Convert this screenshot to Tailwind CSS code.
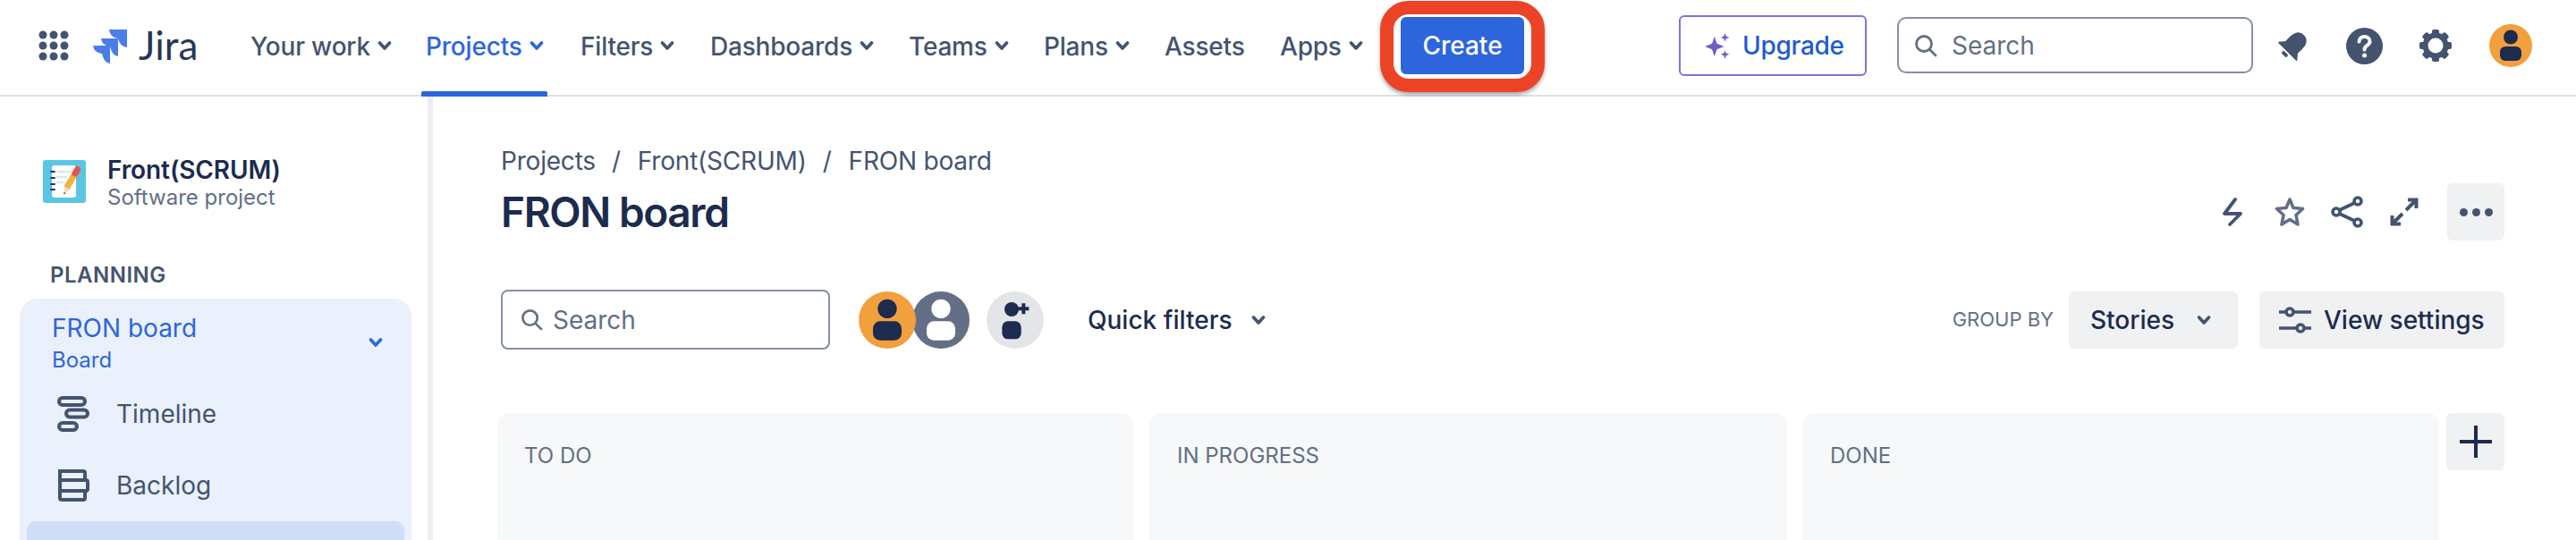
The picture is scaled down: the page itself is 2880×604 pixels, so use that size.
<!DOCTYPE html>
<html lang="en">
<head>
<meta charset="utf-8">
<title>FRON board</title>
<script src="https://cdn.jsdelivr.net/npm/@tailwindcss/browser@4"></script>
</head>
<body class="bg-white">
<div class="w-[2880px] h-[604px] overflow-hidden bg-white font-['Inter','Liberation_Sans',sans-serif] text-[#44546F]">

  <!-- Top navigation -->
  <header class="relative flex h-[108px] items-start border-b-2 border-[#DFE1E6] bg-white">
    <svg class="ml-[42px] mt-[33px] h-[36px] w-[36px] shrink-0" viewBox="0 0 36 36" fill="#44546F"><circle cx="6" cy="6" r="4.5"/><circle cx="18" cy="6" r="4.5"/><circle cx="30" cy="6" r="4.5"/><circle cx="6" cy="18" r="4.5"/><circle cx="18" cy="18" r="4.5"/><circle cx="30" cy="18" r="4.5"/><circle cx="6" cy="30" r="4.5"/><circle cx="18" cy="30" r="4.5"/><circle cx="30" cy="30" r="4.5"/></svg>
    <svg class="ml-[26px] mt-[33px] h-[38px] w-[38px] shrink-0" viewBox="0 0 38 38" fill="#4A7DE8">
      <path d="M18 0H38V20Q30 19 28 10Q19 9 18 0Z"/>
      <path d="M9 10H28V30Q21 29 19 19Q10 18 9 10Z"/>
      <path d="M0 18H19V38Q12 37 10 27Q1 26 0 18Z"/>
    </svg>
    <span class="ml-[13px] mt-[20px] w-[125px] shrink-0 font-['Lato',sans-serif] text-[44px] leading-[60px] font-normal text-[#253858]">Jira</span>

    <nav class="flex h-[106px] items-start text-[28px] leading-[104px] font-medium tracking-[-0.2px] whitespace-nowrap">
      <a class="flex w-[191px] items-start">Your work<svg class="ml-[8px] mt-[43px] h-[16px] w-[16px]" viewBox="0 0 16 16" fill="none" stroke="#44546F" stroke-width="3.6" stroke-linecap="round" stroke-linejoin="round"><path d="M2.5 5 8 11l5.500-6"/></svg></a>
      <a class="relative flex h-[107px] w-[178px] items-start pl-[5px] text-[#2D66DC]">Projects<svg class="ml-[8px] mt-[43px] h-[16px] w-[16px]" viewBox="0 0 16 16" fill="none" stroke="#2D66DC" stroke-width="3.6" stroke-linecap="round" stroke-linejoin="round"><path d="M2.500 5 8 11l5.500-6"/></svg><span class="absolute bottom-[-1px] left-0 h-[6px] w-[141px] rounded-t-[2px] bg-[#2D66DC]"></span></a>
      <a class="flex w-[145px] items-start">Filters<svg class="ml-[8px] mt-[43px] h-[16px] w-[16px]" viewBox="0 0 16 16" fill="none" stroke="#44546F" stroke-width="3.6" stroke-linecap="round" stroke-linejoin="round"><path d="M2.500 5 8 11l5.500-6"/></svg></a>
      <a class="flex w-[222px] items-start">Dashboards<svg class="ml-[8px] mt-[43px] h-[16px] w-[16px]" viewBox="0 0 16 16" fill="none" stroke="#44546F" stroke-width="3.6" stroke-linecap="round" stroke-linejoin="round"><path d="M2.500 5 8 11l5.500-6"/></svg></a>
      <a class="flex w-[151px] items-start">Teams<svg class="ml-[8px] mt-[43px] h-[16px] w-[16px]" viewBox="0 0 16 16" fill="none" stroke="#44546F" stroke-width="3.6" stroke-linecap="round" stroke-linejoin="round"><path d="M2.500 5 8 11l5.500-6"/></svg></a>
      <a class="flex w-[135px] items-start">Plans<svg class="ml-[8px] mt-[43px] h-[16px] w-[16px]" viewBox="0 0 16 16" fill="none" stroke="#44546F" stroke-width="3.6" stroke-linecap="round" stroke-linejoin="round"><path d="M2.500 5 8 11l5.500-6"/></svg></a>
      <a class="w-[129px]">Assets</a>
      <a class="flex w-[112px] items-start">Apps<svg class="ml-[8px] mt-[43px] h-[16px] w-[16px]" viewBox="0 0 16 16" fill="none" stroke="#44546F" stroke-width="3.6" stroke-linecap="round" stroke-linejoin="round"><path d="M2.500 5 8 11l5.500-6"/></svg></a>
    </nav>

    <!-- Create, with the red annotation round it -->
    <div class="mt-[1px] flex h-[102px] w-[184px] shrink-0 items-start rounded-[32px] border-[15px] border-[#EC4326] bg-white shadow-[0_3px_4px_rgba(0,0,0,0.35)]">
      <button class="ml-[8px] mt-[3px] h-[64px] w-[138px] rounded-[6px] bg-[#2D66DC] text-[28px] font-medium text-white">Create</button>
    </div>

    <button class="ml-[150px] mt-[17px] flex h-[68px] w-[210px] shrink-0 items-center rounded-[6px] border-2 border-[#8270DB] pl-[26px] text-[28px] font-medium tracking-[-0.3px] text-[#1F5BCE]">
      <svg class="mr-[13px] h-[30px] w-[30px]" viewBox="0 0 28 28" fill="#6E5DC6"><path d="M11 4.500 13.500 12 21 15l-7.500 3L11 25.500 8.500 18 1 15l7.500-3Z"/><path d="M22 1l1.200 3.300L26.500 5.500l-3.300 1.200L22 10l-1.200-3.300-3.300-1.200 3.300-1.200Z"/><path d="M22 19l1.200 3 3.300 1.200-3.300 1.200L22 28l-1.200-3.600-3.300-1.200 3.300-1.200Z"/></svg>
      Upgrade
    </button>

    <div class="ml-[34px] mt-[19px] flex h-[63px] w-[398px] shrink-0 items-center rounded-[10px] border-2 border-[#8590A2] pl-[17px] text-[28px] text-[#626F86]">
      <svg class="mr-[16px] h-[26px] w-[26px]" viewBox="0 0 26 26" fill="none" stroke="#626F86" stroke-width="2.800" stroke-linecap="round"><circle cx="11" cy="11" r="8.500"/><path d="M17.500 17.500 24 24"/></svg>
      Search
    </div>

    <svg class="ml-[27px] mt-[33px] h-[36px] w-[36px] shrink-0" viewBox="0 0 36 36" fill="#44546F">
      <g transform="rotate(45 18 18)">
        <path d="M18 2C11 2 9 8 9 13V21L4 27H32L27 21V13C27 8 25 2 18 2Z" stroke="#44546F" stroke-width="1.500" stroke-linejoin="round"/>
        <rect x="14" y="29.500" width="8" height="4" rx="2"/>
      </g>
    </svg>
    <svg class="ml-[41px] mt-[31px] h-[41px] w-[41px] shrink-0" viewBox="0 0 41 41">
      <circle cx="20.500" cy="20.500" r="20.500" fill="#44546F"/>
      <path d="M14.500 15.500C14.500 12 17 10 20.500 10S26.500 12 26.500 15.500C26.500 20 20.500 19.500 20.500 24.500" fill="none" stroke="#fff" stroke-width="4" stroke-linecap="round"/>
      <circle cx="20.500" cy="31" r="2.500" fill="#fff"/>
    </svg>
    <svg class="ml-[40px] mt-[32px] h-[38px] w-[38px] shrink-0" viewBox="0 0 38 38" fill="#44546F">
      <g><rect x="15" y="1" width="8" height="36" rx="2"/><rect x="15" y="1" width="8" height="36" rx="2" transform="rotate(45 19 19)"/><rect x="15" y="1" width="8" height="36" rx="2" transform="rotate(90 19 19)"/><rect x="15" y="1" width="8" height="36" rx="2" transform="rotate(135 19 19)"/></g>
      <circle cx="19" cy="19" r="14.500"/><circle cx="19" cy="19" r="8.500" fill="#fff"/>
    </svg>
    <svg class="ml-[41px] mt-[27px] h-[48px] w-[48px] shrink-0" viewBox="0 0 48 48">
      <circle cx="24" cy="24" r="24" fill="#F2A03D"/><circle cx="24" cy="14.500" r="8" fill="#1C2B4E"/><rect x="12" y="25" width="24" height="16" rx="6" fill="#1C2B4E"/>
    </svg>
  </header>

  <div class="flex h-[496px]">
    <!-- Sidebar -->
    <aside class="w-[478px] shrink-0 pt-[71px]">
      <div class="flex h-[48px] pl-[48px]">
        <svg class="h-[48px] w-[48px] shrink-0" viewBox="0 0 48 48">
          <rect width="48" height="48" rx="3" fill="#5BC5E4"/>
          <rect x="10" y="6" width="27" height="36" rx="3" fill="#fff"/>
          <g stroke="#253858" stroke-width="2" stroke-linecap="round"><path d="M9 13h4M9 20h4M9 27h4M9 33h4"/></g>
          <g stroke="#DCE6EE" stroke-width="2.500"><path d="M15 13h17M15 19h12M15 25h8"/></g>
          <path d="M26.500 31 36 15" stroke="#F2B33D" stroke-width="7"/>
          <path d="M36 15 38.500 10.500" stroke="#E5544B" stroke-width="7" stroke-linecap="round"/>
          <path d="M24.500 30 30 33 23.500 38Z" fill="#F3D7A6"/><path d="M23.500 36 25.500 37 23.500 38.500Z" fill="#253858"/>
        </svg>
        <div class="ml-[24px] mt-[-6px] whitespace-nowrap">
          <div class="text-[28px] leading-[34px] font-semibold tracking-[-0.1px] text-[#1C2B4E]">Front(SCRUM)</div>
          <div class="text-[24px] leading-[28px] text-[#626F86]">Software project</div>
        </div>
      </div>
      <div class="ml-[56px] mt-[67px] text-[24px] leading-[28px] font-semibold tracking-[0.5px] text-[#44546F]">PLANNING</div>
      <div class="ml-[22px] mt-[12px] h-[310px] w-[438px] rounded-t-[20px] bg-[#EAF0FC]">
        <div class="relative h-[100px] pl-[36px] pt-[13px] text-[#2D66DC]">
          <div class="text-[28px] leading-[40px]">FRON board</div>
          <div class="text-[24px] leading-[32px]">Board</div>
          <svg class="absolute right-[32px] top-[41px] h-[16px] w-[16px]" viewBox="0 0 16 16" fill="none" stroke="#2D66DC" stroke-width="3.600" stroke-linecap="round" stroke-linejoin="round"><path d="M2.500 5 8 11l5.500-6"/></svg>
        </div>
        <div class="flex h-[48px] items-center pl-[42px] mt-[5px] text-[28px]">
          <svg class="h-[40px] w-[36px] shrink-0" viewBox="0 0 36 40" fill="none" stroke="#44546F" stroke-width="4"><rect x="2" y="2" width="29" height="8" rx="4"/><rect x="10" y="15.500" width="24" height="8" rx="4"/><rect x="2" y="30" width="20" height="8" rx="4"/></svg>
          <span class="ml-[30px]">Timeline</span>
        </div>
        <div class="flex h-[48px] items-center pl-[42px] mt-[32px] text-[28px]">
          <svg class="h-[36px] w-[36px] shrink-0" viewBox="0 0 36 36" fill="none" stroke="#44546F" stroke-width="4"><path d="M3 2H29A2 2 0 0 1 31 4V12H3Z"/><path d="M3 24V12H32A2 2 0 0 1 34 14V22A2 2 0 0 1 32 24Z"/><path d="M3 24H31V32A2 2 0 0 1 29 34H5A2 2 0 0 1 3 32Z"/></svg>
          <span class="ml-[30px]">Backlog</span>
        </div>
        <div class="mx-[8px] mt-[16px] h-[60px] rounded-t-[10px] bg-[#CEDDF8]"></div>
      </div>
    </aside>
    <div class="w-[6px] shrink-0 bg-[#EEEEF0]"></div>

    <!-- Board -->
    <main class="relative min-w-0 flex-1 pl-[76px] pr-[80px] pt-[42px]">
      <div class="flex h-[50px] items-end text-[28px] leading-[40px] tracking-[-0.2px] whitespace-nowrap">
        <span>Projects</span><span class="ml-[18px] mr-[19px]">/</span><span>Front(SCRUM)</span><span class="ml-[18px] mr-[19px]">/</span><span>FRON board</span>
      </div>
      <div class="mt-[7px] flex h-[60px] items-start justify-between">
        <h1 class="text-[46px] leading-[60px] font-semibold tracking-[-1.4px] text-[#1C2B4E]">FRON board</h1>
        <div class="mt-[-2px] flex items-center">
          <svg class="h-[32px] w-[24px]" viewBox="0 0 24 32" fill="none" stroke="#44546F" stroke-width="3.800" stroke-linejoin="round" stroke-linecap="round"><path d="M15 2 3 18H21L9 30"/></svg>
          <svg class="ml-[35px] h-[34px] w-[34px]" viewBox="0 0 34 34" fill="none" stroke="#626F86" stroke-width="3.600" stroke-linejoin="round"><path d="M17 3 21 12.500 31.500 13.500 24 20.500 26 31 17 25.500 8 31 10 20.500 2.500 13.500 13 12.500Z"/></svg>
          <svg class="ml-[29px] h-[36px] w-[36px]" viewBox="0 0 36 36" fill="none" stroke="#44546F" stroke-width="3.600"><circle cx="6" cy="18" r="4"/><circle cx="30" cy="6" r="4"/><circle cx="30" cy="30" r="4"/><path d="M9.500 16 26.500 8M9.500 20 26.500 28"/></svg>
          <svg class="ml-[30px] h-[32px] w-[32px]" viewBox="0 0 32 32" fill="none" stroke="#44546F" stroke-width="4"><path d="M18 14 29 3M20 2.500H29.500V12M14 18 3 29M2.500 20V29.500H12"/></svg>
          <div class="ml-[32px] flex h-[64px] w-[64px] items-center justify-center gap-[5px] rounded-[6px] bg-[#F0F1F3]">
            <span class="h-[9px] w-[9px] rounded-full bg-[#44546F]"></span><span class="h-[9px] w-[9px] rounded-full bg-[#44546F]"></span><span class="h-[9px] w-[9px] rounded-full bg-[#44546F]"></span>
          </div>
        </div>
      </div>

      <div class="mt-[57px] flex h-[67px] items-center justify-between">
        <div class="flex items-center">
          <div class="flex h-[67px] w-[368px] items-center rounded-[8px] border-2 border-[#8590A2] pl-[20px] text-[28px] text-[#626F86]">
            <svg class="mr-[11px] h-[25px] w-[25px]" viewBox="0 0 26 26" fill="none" stroke="#626F86" stroke-width="2.800" stroke-linecap="round"><circle cx="11" cy="11" r="8.500"/><path d="M17.500 17.500 24 24"/></svg>
            Search
          </div>
          <svg class="relative z-10 ml-[32px] h-[64px] w-[64px] shrink-0" viewBox="0 0 48 48"><circle cx="24" cy="24" r="24" fill="#F2A03D"/><circle cx="24" cy="14.500" r="8" fill="#1C2B4E"/><rect x="12" y="25" width="24" height="16" rx="6" fill="#1C2B4E"/></svg>
          <svg class="ml-[-4px] h-[64px] w-[64px] shrink-0" viewBox="0 0 48 48"><circle cx="24" cy="24" r="24" fill="#626F86"/><circle cx="24" cy="14.500" r="8" fill="#fff"/><rect x="12" y="25" width="24" height="16" rx="6" fill="#fff"/></svg>
          <svg class="ml-[19px] h-[64px] w-[64px] shrink-0" viewBox="0 0 48 48"><circle cx="24" cy="24" r="24" fill="#E4E5E9"/><circle cx="21" cy="15" r="6" fill="#1C2B4E"/><rect x="13" y="25" width="16" height="15" rx="5" fill="#1C2B4E"/><path d="M31 10V19M26.500 14.500H35.500" stroke="#1C2B4E" stroke-width="3"/></svg>
          <span class="ml-[49px] text-[28px] font-medium whitespace-nowrap text-[#1C2B4E]">Quick filters</span>
          <svg class="ml-[21px] h-[16px] w-[16px]" viewBox="0 0 16 16" fill="none" stroke="#44546F" stroke-width="3.600" stroke-linecap="round" stroke-linejoin="round"><path d="M2.500 5 8 11l5.500-6"/></svg>
        </div>
        <div class="flex items-center whitespace-nowrap">
          <span class="text-[22px] text-[#626F86]">GROUP BY</span>
          <div class="ml-[17px] flex h-[64px] w-[189px] items-center rounded-[6px] bg-[#F0F1F3] pl-[24px] text-[28px] font-medium text-[#1C2B4E]">Stories<svg class="ml-[25px] h-[16px] w-[16px]" viewBox="0 0 16 16" fill="none" stroke="#44546F" stroke-width="3.600" stroke-linecap="round" stroke-linejoin="round"><path d="M2.500 5 8 11l5.500-6"/></svg></div>
          <div class="ml-[24px] flex h-[64px] w-[274px] items-center rounded-[6px] bg-[#F0F1F3] pl-[22px] text-[28px] font-medium text-[#1C2B4E]">
            <svg class="mr-[14px] h-[32px] w-[36px]" viewBox="0 0 36 32" fill="none" stroke="#44546F" stroke-width="3.600"><path d="M0 7H8M16 7H36M0 25H20M28 25H36"/><circle cx="12" cy="7" r="4"/><circle cx="24" cy="25" r="4"/></svg>
            View settings
          </div>
        </div>
      </div>

      <div class="ml-[-4px] mt-[71px] flex gap-[18px]">
        <div class="h-[200px] w-[712px] rounded-t-[12px] bg-[#F7F8F9] pl-[30px] pt-[34px] text-[24px] leading-[28px] text-[#626F86]">TO DO</div>
        <div class="h-[200px] w-[714px] rounded-t-[12px] bg-[#F7F8F9] pl-[31px] pt-[34px] text-[24px] leading-[28px] text-[#626F86]">IN PROGRESS</div>
        <div class="h-[200px] w-[712px] rounded-t-[12px] bg-[#F7F8F9] pl-[30px] pt-[34px] text-[24px] leading-[28px] text-[#626F86]">DONE</div>
        <div class="ml-[-10px] flex h-[64px] w-[65px] shrink-0 items-center justify-center rounded-[6px] bg-[#F0F1F3]">
          <svg class="h-[36px] w-[36px]" viewBox="0 0 36 36" stroke="#1C2B4E" stroke-width="4"><path d="M18 0V36M0 18H36"/></svg>
        </div>
      </div>
    </main>
  </div>
</div>
</body>
</html>
